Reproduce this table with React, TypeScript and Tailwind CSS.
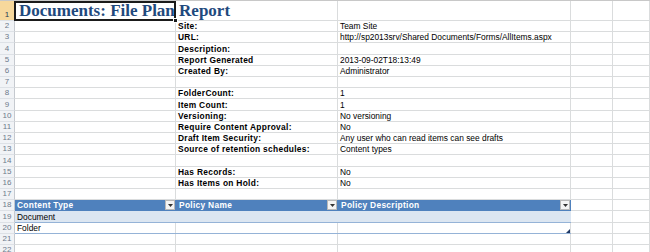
import React from "react";

const GRID = "border-[#dadcdd]";

type RowDef = {
  n: number;
  h: number;
  label?: string;
  value?: string;
};

const rows: RowDef[] = [
  { n: 2, h: 11, label: "Site:", value: "Team Site" },
  { n: 3, h: 11, label: "URL:", value: "http://sp2013srv/Shared Documents/Forms/AllItems.aspx" },
  { n: 4, h: 12, label: "Description:" },
  { n: 5, h: 11, label: "Report Generated", value: "2013-09-02T18:13:49" },
  { n: 6, h: 11, label: "Created By:", value: "Administrator" },
  { n: 7, h: 11 },
  { n: 8, h: 11, label: "FolderCount:", value: "1" },
  { n: 9, h: 12, label: "Item Count:", value: "1" },
  { n: 10, h: 11, label: "Versioning:", value: "No versioning" },
  { n: 11, h: 11, label: "Require Content Approval:", value: "No" },
  { n: 12, h: 11, label: "Draft Item Security:", value: "Any user who can read items can see drafts" },
  { n: 13, h: 11, label: "Source of retention schedules:", value: "Content types" },
  { n: 14, h: 12 },
  { n: 15, h: 11, label: "Has Records:", value: "No" },
  { n: 16, h: 11, label: "Has Items on Hold:", value: "No" },
  { n: 17, h: 11 },
];

function hClass(h: number) {
  return h === 12 ? "h-[12px]" : "h-[11px]";
}

function RowHead({ n, selected }: { n: number; selected?: boolean }) {
  return (
    <div
      className={`w-[15px] shrink-0 flex items-end justify-center border-r border-b border-r-[#c5c9cf] border-b-[#dde1e6] text-[8px] leading-[10px] ${
        selected ? "bg-[#f7d89c] text-[#2a3a52]" : "bg-[#f1f3f6] text-[#6d7a8b]"
      }`}
    >
      {n}
    </div>
  );
}

function Cell({
  w,
  children,
  bold,
  className = "",
}: {
  w: string;
  children?: React.ReactNode;
  bold?: boolean;
  className?: string;
}) {
  return (
    <div
      className={`${w} shrink-0 border-r border-b ${GRID} flex items-end pl-[2px] whitespace-nowrap overflow-visible text-[8.4px] leading-[10px] text-black ${
        bold ? "font-bold tracking-[0.3px]" : ""
      } ${className}`}
    >
      {children}
    </div>
  );
}

function FilterBtn() {
  return (
    <div className="absolute right-[1px] top-[0px] w-[10px] h-[10px] bg-[#f4f4f4] border border-[#b8b8b8] flex items-center justify-center">
      <svg width="5" height="3" viewBox="0 0 5 3">
        <path d="M0 0 L5 0 L2.5 3 Z" fill="#333" />
      </svg>
    </div>
  );
}

export default function App() {
  const font = { fontFamily: '"Liberation Sans", Arial, sans-serif' };
  return (
    <div className="w-[650px] h-[252px] overflow-hidden bg-white flex flex-col" style={font}>
      <div className="h-[1px] bg-[#c8c8c8] shrink-0" />
      {/* Row 1 */}
      <div className="flex h-[20px] shrink-0">
        <RowHead n={1} selected />
        <div className={`relative w-[161px] shrink-0 border-r border-b ${GRID} flex items-end pl-[4px] overflow-visible`}>
          <span
            className="whitespace-nowrap font-bold text-[17px] leading-[19px] text-[#1f497d]"
            style={{ fontFamily: '"Liberation Serif", "Times New Roman", serif' }}
          >
            Documents: File Plan Report
          </span>
          <div className="absolute left-[-1px] top-[0px] right-[-1px] bottom-[-1px] border-2 border-[#1b1b1b] z-10" />
          <div className="absolute right-[-3px] bottom-[-3px] w-[5px] h-[5px] bg-[#1b1b1b] border border-white z-20" />
        </div>
        <Cell w="w-[162px]" />
        <Cell w="w-[233px]" />
        <Cell w="w-[42px]" />
        <Cell w="w-[37px]" />
      </div>
      {rows.map((r) => (
        <div key={r.n} className={`flex ${hClass(r.h)} shrink-0`}>
          <RowHead n={r.n} />
          <Cell w="w-[161px]" />
          <Cell w="w-[162px]" bold>
            {r.label}
          </Cell>
          <Cell w="w-[233px]">{r.value}</Cell>
          <Cell w="w-[42px]" />
          <Cell w="w-[37px]" />
        </div>
      ))}
      {/* Row 18 header */}
      <div className="flex h-[11px] shrink-0">
        <RowHead n={18} />
        <div className="flex bg-[#4f81bd] border-b border-[#4f81bd] text-white font-bold text-[8.4px] leading-[10px] tracking-[0.3px]">
          <div className="relative w-[161px] pl-[2px] flex items-end whitespace-nowrap">
            Content Type
            <FilterBtn />
          </div>
          <div className="relative w-[162px] pl-[3px] flex items-end whitespace-nowrap">
            Policy Name
            <FilterBtn />
          </div>
          <div className="relative w-[233px] pl-[3px] flex items-end whitespace-nowrap">
            Policy Description
            <FilterBtn />
          </div>
        </div>
        <Cell w="w-[42px]" />
        <Cell w="w-[37px]" />
      </div>
      {/* Row 19 */}
      <div className="flex h-[12px] shrink-0">
        <RowHead n={19} />
        <div className="flex bg-[#dce6f1] border-b border-[#95b3d7] text-[8.4px] leading-[10px] text-black">
          <div className="w-[161px] pl-[2px] flex items-end">Document</div>
          <div className="w-[162px]" />
          <div className="w-[233px]" />
        </div>
        <Cell w="w-[42px]" />
        <Cell w="w-[37px]" />
      </div>
      {/* Row 20 */}
      <div className="flex h-[11px] shrink-0">
        <RowHead n={20} />
        <div className="relative flex border-b border-[#95b3d7] text-[8.4px] leading-[10px] text-black">
          <div className={`w-[161px] pl-[2px] flex items-end border-r ${GRID}`}>Folder</div>
          <div className={`w-[162px] border-r ${GRID}`} />
          <div className={`w-[233px] border-r ${GRID}`} />
          <svg className="absolute right-[1px] bottom-[0px]" width="4" height="4" viewBox="0 0 4 4">
            <path d="M4 0 L4 4 L0 4 Z" fill="#1f3864" />
          </svg>
        </div>
        <Cell w="w-[42px]" />
        <Cell w="w-[37px]" />
      </div>
      {[21, 22].map((n) => (
        <div key={n} className="flex h-[11px] shrink-0">
          <RowHead n={n} />
          <Cell w="w-[161px]" />
          <Cell w="w-[162px]" />
          <Cell w="w-[233px]" />
          <Cell w="w-[42px]" />
          <Cell w="w-[37px]" />
        </div>
      ))}
    </div>
  );
}
